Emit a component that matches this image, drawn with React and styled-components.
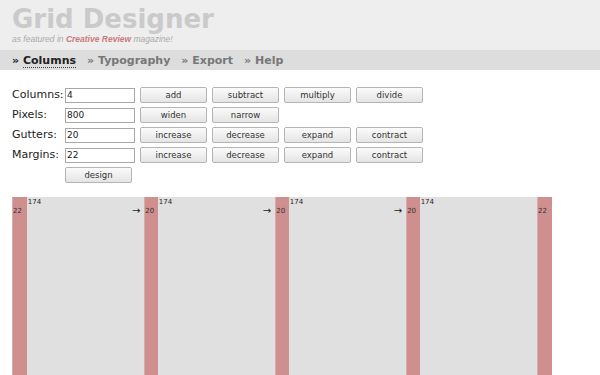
import React from 'react';
import styled, { createGlobalStyle } from 'styled-components';

const GlobalStyle = createGlobalStyle`
    body{
        margin: 0;
        background: #fff;
        font-family: "DejaVu Sans", Verdana, sans-serif;
    }
`;

const SCALE = 0.675;
const settings = { columns: 4, pixels: 800, gutters: 20, margins: 22 };
const colWidth = (settings.pixels - settings.margins * 2 - settings.gutters * (settings.columns - 1)) / settings.columns;

const App = () => {
    const cols = [];
    for (let i = 0; i < settings.columns; i++) {
        if (i > 0) {
            cols.push(
                <Gutter key={'g' + i} style={{ width: settings.gutters * SCALE }}>
                    <SideLabel>{settings.gutters}</SideLabel>
                </Gutter>
            );
        }
        cols.push(
            <Column key={'c' + i} style={{ width: colWidth * SCALE }}>
                <ColLabel>{colWidth}</ColLabel>
                {i < settings.columns - 1 && <Arrow>→</Arrow>}
            </Column>
        );
    }

    return (
        <>
            <GlobalStyle />
            <Header>
                <Title>Grid Designer</Title>
                <Tagline>as featured in <strong>Creative Review</strong> magazine!</Tagline>
            </Header>
            <Nav>
                <NavItem $active>» <span>Columns</span></NavItem>
                <NavItem>» <span>Typography</span></NavItem>
                <NavItem>» <span>Export</span></NavItem>
                <NavItem>» <span>Help</span></NavItem>
            </Nav>

            {/* Controls */}
            <Form>
                <Label>Columns:</Label>
                <Input defaultValue={settings.columns} />
                <Buttons>
                    <Button>add</Button>
                    <Button>subtract</Button>
                    <Button>multiply</Button>
                    <Button>divide</Button>
                </Buttons>

                <Label>Pixels:</Label>
                <Input defaultValue={settings.pixels} />
                <Buttons>
                    <Button>widen</Button>
                    <Button>narrow</Button>
                </Buttons>

                <Label>Gutters:</Label>
                <Input defaultValue={settings.gutters} />
                <Buttons>
                    <Button>increase</Button>
                    <Button>decrease</Button>
                    <Button>expand</Button>
                    <Button>contract</Button>
                </Buttons>

                <Label>Margins:</Label>
                <Input defaultValue={settings.margins} />
                <Buttons>
                    <Button>increase</Button>
                    <Button>decrease</Button>
                    <Button>expand</Button>
                    <Button>contract</Button>
                </Buttons>

                <span />
                <Button>design</Button>
            </Form>

            {/* Grid preview */}
            <Canvas>
                <Gutter style={{ width: settings.margins * SCALE }}>
                    <SideLabel>{settings.margins}</SideLabel>
                </Gutter>
                {cols}
                <Gutter style={{ width: settings.margins * SCALE }}>
                    <SideLabel>{settings.margins}</SideLabel>
                </Gutter>
            </Canvas>
        </>
    );
};

const Header = styled.div`
    background: #eeeeee;
    padding: 4px 12px 0;
    height: 46px;
`;

const Title = styled.h1`
    margin: 0;
    font-family: "DejaVu Sans", Verdana, sans-serif;
    font-weight: bold;
    font-size: 26px;
    line-height: 30px;
    color: #cacaca;
`;

const Tagline = styled.p`
    margin: 0;
    font-family: "Liberation Sans", Arial, sans-serif;
    font-style: italic;
    font-size: 8.5px;
    line-height: 10px;
    color: #aaaaaa;
    strong{
        color: #c97a7a;
    }
`;

const Nav = styled.div`
    background: #dddddd;
    height: 20px;
    display: flex;
    align-items: center;
    gap: 11px;
    padding: 0 12px;
`;

const NavItem = styled.div`
    font-family: "DejaVu Sans", Verdana, sans-serif;
    font-weight: bold;
    font-size: 11px;
    color: ${props => props.$active ? '#222' : '#777'};
    span{
        border-bottom: ${props => props.$active ? '1px dotted #444' : 'none'};
    }
`;

const Form = styled.div`
    display: grid;
    grid-template-columns: 53px 70px auto;
    row-gap: 4px;
    align-items: center;
    padding: 17px 12px 0;
    width: max-content;
`;

const Label = styled.div`
    font-size: 11px;
    color: #222;
    line-height: 16px;
    white-space: nowrap;
`;

const Input = styled.input`
    box-sizing: border-box;
    width: 70px;
    height: 15px;
    border: 1px solid #a9a9a9;
    padding: 0 1px;
    font-family: "DejaVu Sans", sans-serif;
    font-size: 9px;
    color: #222;
`;

const Buttons = styled.div`
    display: flex;
    gap: 5px;
    padding-left: 5px;
`;

const Button = styled.button`
    box-sizing: border-box;
    width: 67px;
    height: 16px;
    padding: 0;
    border: 1px solid #b5b5b5;
    border-radius: 2px;
    background: linear-gradient(#fbfbfb, #e4e4e4);
    font-family: "DejaVu Sans", sans-serif;
    font-size: 8.5px;
    color: #333;
`;

const Canvas = styled.div`
    display: flex;
    margin: 14px 12px 0;
    height: 200px;
`;

const Gutter = styled.div`
    position: relative;
    box-sizing: border-box;
    background: #cf8f8f;
    border-left: 1px solid #dcaaaa;
    flex-shrink: 0;
`;

const Column = styled.div`
    position: relative;
    background: #e0e0e0;
    flex-shrink: 0;
`;

const SideLabel = styled.span`
    position: absolute;
    top: 10px;
    left: 0;
    font-size: 7px;
    color: #333;
`;

const ColLabel = styled.span`
    position: absolute;
    top: 1px;
    left: 1px;
    font-size: 7px;
    color: #222;
`;

const Arrow = styled.span`
    position: absolute;
    top: 8px;
    right: 4px;
    font-size: 10px;
    color: #222;
`;

export default App;
